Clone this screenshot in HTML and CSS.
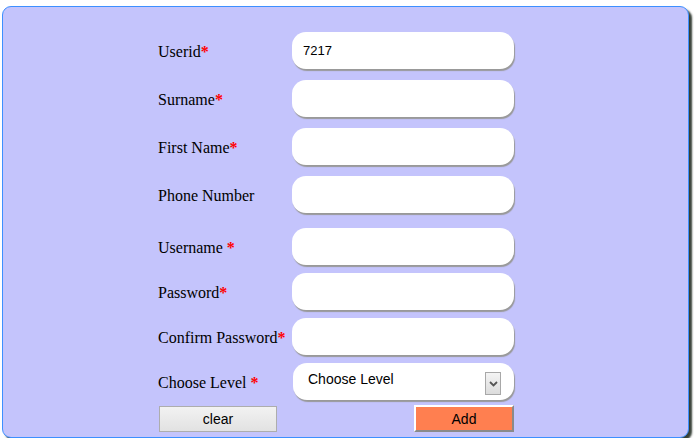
FILE: index.html
```html
<!DOCTYPE html>
<html>
<head>
<meta charset="utf-8">
<link rel="stylesheet" href="styles.css">
</head>
<body>
<div class="panel">
  <form class="form">
    <div class="row r1"><label class="lbl">Userid<span class="req">*</span></label><input class="field" type="text" value="7217"></div>
    <div class="row r2"><label class="lbl">Surname<span class="req">*</span></label><input class="field" type="text"></div>
    <div class="row r2"><label class="lbl">First Name<span class="req">*</span></label><input class="field" type="text"></div>
    <div class="row r2"><label class="lbl">Phone Number</label><input class="field" type="text"></div>
    <div class="row r3"><label class="lbl">Username <span class="req">*</span></label><input class="field" type="text"></div>
    <div class="row r4"><label class="lbl">Password<span class="req">*</span></label><input class="field" type="password"></div>
    <div class="row r4"><label class="lbl">Confirm Password<span class="req">*</span></label><input class="field" type="password"></div>
    <div class="row r4"><label class="lbl">Choose Level <span class="req">*</span></label>
      <div class="field selectbox"><span class="seltext">Choose Level</span><span class="arrow"><svg width="9" height="6" viewBox="0 0 9 6"><path d="M1 1 L4.5 4.5 L8 1" fill="none" stroke="#555" stroke-width="1.8"/></svg></span></div>
    </div>
    <div class="buttons">
      <button type="button" class="btn clear">clear</button>
      <button type="button" class="btn add">Add</button>
    </div>
  </form>
</div>
</body>
</html>
```

FILE: styles.css
```css
html, body {
  margin: 0;
  padding: 0;
  background: #ffffff;
}
.panel {
  margin: 6px 0 0 2px;
  width: 687px;
  height: 432px;
  box-sizing: border-box;
  background: #c4c4fc;
  border: 1px solid #3d8fff;
  border-radius: 9px;
  box-shadow: 3px 3px 2px rgba(20, 30, 20, 0.85);
  padding: 25px 0 0 155px;
}
.form {
  display: flex;
  flex-direction: column;
  width: 359px;
}
.row {
  display: grid;
  grid-template-columns: 134px 222px;
  align-items: center;
  height: 37px;
}
.r2 { margin-top: 11px; }
.r3 { margin-top: 15px; }
.r4 { margin-top: 8px; }
.lbl {
  font-family: "Liberation Serif", "Times New Roman", serif;
  font-size: 16px;
  color: #000;
  padding-top: 2px;
}
.req {
  color: #ff0000;
  font-weight: bold;
}
.field {
  box-sizing: border-box;
  width: 222px;
  height: 37px;
  border: none;
  border-radius: 14px;
  background: #ffffff;
  box-shadow: 1px 2px 1px #999999;
  padding: 0 11px;
  font-family: "Liberation Sans", Arial, sans-serif;
  font-size: 13px;
  color: #000;
  outline: none;
}
.selectbox {
  display: flex;
  align-items: center;
  justify-content: space-between;
  padding: 0 13px 0 15px;
  width: 221px;
  margin-left: 1px;
  font-size: 14px;
}
.seltext {
  margin-top: -5px;
}
.arrow {
  box-sizing: border-box;
  width: 16px;
  height: 23px;
  border: 1px solid #a8a8a8;
  background: linear-gradient(#f4f4f4, #dcdcdc);
  display: flex;
  align-items: center;
  justify-content: center;
  margin-top: 4px;
}
.buttons {
  display: flex;
  justify-content: space-between;
  margin-top: 6px;
  padding-left: 1px;
  width: 355px;
}
.btn {
  font-family: "Liberation Sans", Arial, sans-serif;
  font-size: 14px;
  color: #000;
  padding: 0;
  cursor: pointer;
}
.clear {
  width: 118px;
  height: 26px;
  background: linear-gradient(#f2f2f2, #e2e2e2);
  border: 1px solid #adadad;
}
.add {
  width: 100px;
  height: 27px;
  margin-top: -1px;
  background: #ff7f50;
  border-style: solid;
  border-width: 2px 2px 2px 2px;
  border-color: #ffffff #8a8a8a #8a8a8a #ffffff;
}
```
